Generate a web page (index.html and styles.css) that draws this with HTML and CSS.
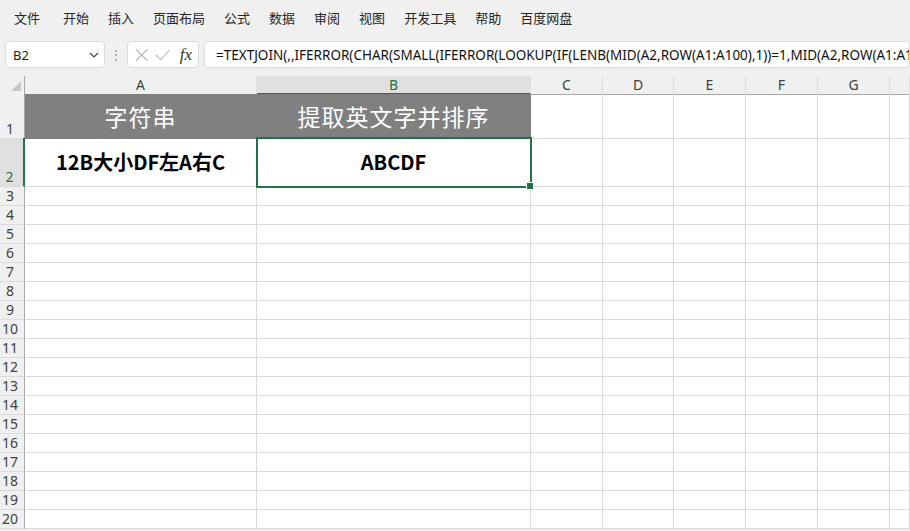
FILE: index.html
```html
<!DOCTYPE html>
<html lang="zh-CN">
<head>
  <meta charset="UTF-8">
  <meta name="viewport" content="width=device-width, initial-scale=1.0">
  <title>TEXTJOIN 提取英文字并排序</title>
  <link rel="stylesheet" href="styles.css">
</head>
<body>
  <div class="menu">
    <span class="menu-item first">文件</span>
    <span class="menu-item">开始</span>
    <span class="menu-item">插入</span>
    <span class="menu-item">页面布局</span>
    <span class="menu-item">公式</span>
    <span class="menu-item">数据</span>
    <span class="menu-item">审阅</span>
    <span class="menu-item">视图</span>
    <span class="menu-item">开发工具</span>
    <span class="menu-item">帮助</span>
    <span class="menu-item">百度网盘</span>
  </div>

  <div class="formula-bar">
    <div class="name-box">
      <span>B2</span>
      <svg width="10" height="6" viewBox="0 0 10 6"><path d="M1 1 L5 5 L9 1" fill="none" stroke="#444" stroke-width="1.2"/></svg>
    </div>
    <div class="grip">⋮</div>
    <div class="fx-box">
      <svg width="14" height="14" viewBox="0 0 14 14"><path d="M1 1 L13 13 M13 1 L1 13" stroke="#b8b8b8" stroke-width="1.2"/></svg>
      <svg width="16" height="14" viewBox="0 0 16 14"><path d="M1 7 L6 12 L15 2" fill="none" stroke="#b8b8b8" stroke-width="1.2"/></svg>
      <span class="fx">fx</span>
    </div>
    <div class="formula">=TEXTJOIN(,,IFERROR(CHAR(SMALL(IFERROR(LOOKUP(IF(LENB(MID(A2,ROW(A1:A100),1))=1,MID(A2,ROW(A1:A100),1)),CODE(MID(A2,ROW(A1:A100),1))),""),ROW(A1:A100))),""))</div>
  </div>

  <div class="sheet">
    <div class="row head">
      <span class="corner"></span>
      <span>A</span><span class="sel-col">B</span><span>C</span><span>D</span><span>E</span><span>F</span><span>G</span><span></span>
    </div>
    <div class="row r1">
      <span class="rh">1</span>
      <span class="title">字符串</span><span class="title">提取英文字并排序</span><span></span><span></span><span></span><span></span><span></span><span></span>
    </div>
    <div class="row r2">
      <span class="rh sel-row">2</span>
      <span class="data">12B大小DF左A右C</span><span class="data active">ABCDF<i class="handle"></i></span><span></span><span></span><span></span><span></span><span></span><span></span>
    </div>
    <div class="row"><span class="rh">3</span><span></span><span></span><span></span><span></span><span></span><span></span><span></span><span></span></div>
    <div class="row"><span class="rh">4</span><span></span><span></span><span></span><span></span><span></span><span></span><span></span><span></span></div>
    <div class="row"><span class="rh">5</span><span></span><span></span><span></span><span></span><span></span><span></span><span></span><span></span></div>
    <div class="row"><span class="rh">6</span><span></span><span></span><span></span><span></span><span></span><span></span><span></span><span></span></div>
    <div class="row"><span class="rh">7</span><span></span><span></span><span></span><span></span><span></span><span></span><span></span><span></span></div>
    <div class="row"><span class="rh">8</span><span></span><span></span><span></span><span></span><span></span><span></span><span></span><span></span></div>
    <div class="row"><span class="rh">9</span><span></span><span></span><span></span><span></span><span></span><span></span><span></span><span></span></div>
    <div class="row"><span class="rh">10</span><span></span><span></span><span></span><span></span><span></span><span></span><span></span><span></span></div>
    <div class="row"><span class="rh">11</span><span></span><span></span><span></span><span></span><span></span><span></span><span></span><span></span></div>
    <div class="row"><span class="rh">12</span><span></span><span></span><span></span><span></span><span></span><span></span><span></span><span></span></div>
    <div class="row"><span class="rh">13</span><span></span><span></span><span></span><span></span><span></span><span></span><span></span><span></span></div>
    <div class="row"><span class="rh">14</span><span></span><span></span><span></span><span></span><span></span><span></span><span></span><span></span></div>
    <div class="row"><span class="rh">15</span><span></span><span></span><span></span><span></span><span></span><span></span><span></span><span></span></div>
    <div class="row"><span class="rh">16</span><span></span><span></span><span></span><span></span><span></span><span></span><span></span><span></span></div>
    <div class="row"><span class="rh">17</span><span></span><span></span><span></span><span></span><span></span><span></span><span></span><span></span></div>
    <div class="row"><span class="rh">18</span><span></span><span></span><span></span><span></span><span></span><span></span><span></span><span></span></div>
    <div class="row"><span class="rh">19</span><span></span><span></span><span></span><span></span><span></span><span></span><span></span><span></span></div>
    <div class="row"><span class="rh">20</span><span></span><span></span><span></span><span></span><span></span><span></span><span></span><span></span></div>
  </div>
</body>
</html>
```

FILE: styles.css
```css
*{
  box-sizing: border-box;
}

body{
  margin: 0;
  background-color: #f0f0f0;
  font-family: "Noto Sans", "Noto Sans CJK SC", sans-serif;
  color: #222;
  overflow: hidden;
}

.menu{
  height: 36px;
  display: flex;
  align-items: center;
  gap: 19px;
  padding-left: 14px;
  padding-bottom: 2px;
  font-family: "Noto Sans CJK SC", sans-serif;
  font-size: 13px;
  color: #262626;
}
.menu-item.first{
  margin-right: 4px;
}

.formula-bar{
  height: 40px;
  display: flex;
  align-items: flex-start;
  padding: 5px 0 0 5px;
  white-space: nowrap;
}
.name-box, .fx-box, .formula{
  height: 27px;
  background-color: white;
  border: 1px solid #dcdcdc;
  border-radius: 4px;
  display: flex;
  align-items: center;
  font-size: 13px;
}
.name-box{
  width: 100px;
  padding: 0 5px 0 7px;
  justify-content: space-between;
}
.grip{
  width: 22px;
  text-align: center;
  color: #9a9a9a;
  font-size: 14px;
  line-height: 27px;
}
.fx-box{
  width: 72px;
  padding: 0 6px 0 7px;
  gap: 7px;
}
.fx{
  font-family: "Liberation Serif", serif;
  font-style: italic;
  font-size: 17px;
  color: #333;
  margin-left: 2px;
}
.formula{
  margin-left: 5px;
  flex: 1;
  padding-left: 11px;
  overflow: hidden;
  color: #111;
  font-size: 13.5px;
}

.sheet{
  background-color: white;
}
.row{
  display: grid;
  grid-template-columns: 25px 232px 274px 72px 71px 72px 72px 72px 1fr;
  height: 19px;
}
.row span{
  border-right: 1px solid #dadada;
  border-bottom: 1px solid #dadada;
  position: relative;
}

.head{
  height: 18px;
  background-color: #f0f0f0;
}
.head span{
  border-bottom: 1px solid #a8a8a8;
  border-right: 1px solid #dcdcdc;
  text-align: center;
  font-size: 14px;
  line-height: 17px;
  color: #404040;
}
.head .corner{
  border-right: 1px solid #a8a8a8;
}
.corner::after{
  content: "";
  position: absolute;
  right: 3px;
  bottom: 3px;
  border-left: 10px solid transparent;
  border-bottom: 10px solid #c8c8c8;
}
.head .sel-col{
  background-color: #e0e0e0;
  color: #217346;
  border-bottom: 2px solid #217346;
}

.rh{
  background-color: #f0f0f0;
  border-right-color: #a8a8a8 !important;
  font-size: 14px;
  color: #404040;
  display: flex;
  align-items: flex-end;
  justify-content: center;
  padding-right: 4px;
  line-height: 18px;
}
.rh.sel-row{
  background-color: #e0e0e0;
  color: #217346;
  border-right: 2px solid #217346 !important;
}

.r1{
  height: 44px;
}
.r1 .title{
  background-color: #808080;
  border-color: #808080;
  color: white;
  font-family: "Noto Sans CJK SC", sans-serif;
  font-size: 23px;
  letter-spacing: 1px;
  text-align: center;
  line-height: 44px;
}

.r2{
  height: 49px;
}
.r2 .data{
  font-family: "Noto Sans CJK SC", sans-serif;
  font-weight: bold;
  font-size: 20px;
  color: black;
  text-align: center;
  line-height: 48px;
}
.r2 .active{
  outline: 2px solid #217346;
  outline-offset: -1px;
  z-index: 1;
}
.handle{
  position: absolute;
  right: -4px;
  bottom: -4px;
  width: 6px;
  height: 6px;
  background-color: #217346;
  border: 1px solid white;
  box-sizing: content-box;
}
```
